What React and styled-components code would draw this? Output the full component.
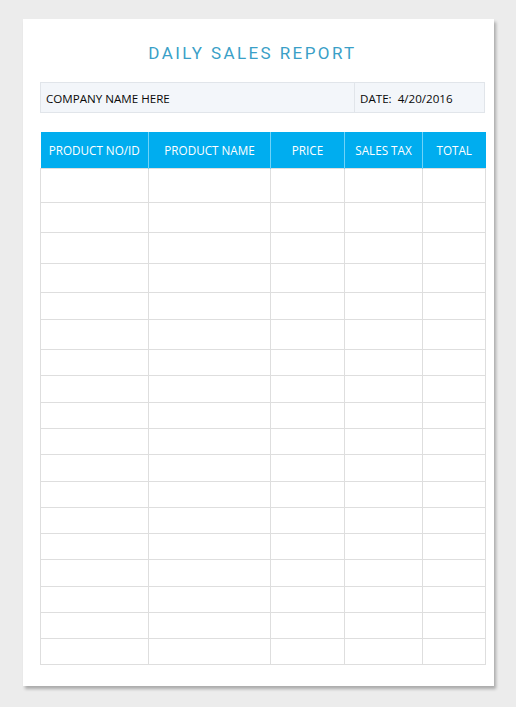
import React from "react";
import styled, { createGlobalStyle } from "styled-components";

const GlobalStyle = createGlobalStyle`
  html, body {
    margin: 0;
    padding: 0;
    background: #ececec;
  }
  body {
    font-family: "Open Sans", "Liberation Sans", sans-serif;
  }
`;

const Page = styled.div`
  width: 516px;
  height: 707px;
  padding: 19px 0 0 23px;
  box-sizing: border-box;
`;

const Paper = styled.div`
  width: 471px;
  height: 667px;
  background: #ffffff;
  box-shadow: 2px 3px 3px rgba(0, 0, 0, 0.28);
  padding: 0 9px 0 17px;
  box-sizing: border-box;
  display: flex;
  flex-direction: column;
`;

const Title = styled.h1`
  margin: 0;
  height: 63px;
  display: flex;
  align-items: center;
  justify-content: center;
  padding: 4px 20px 0 0;
  box-sizing: border-box;
  font-family: Roboto, "Liberation Sans", sans-serif;
  font-weight: 400;
  font-size: 17px;
  letter-spacing: 2.4px;
  color: #3a9fc7;
`;

const InfoBar = styled.div`
  display: flex;
  height: 31px;
  background: #f3f6fa;
  border: 1px solid #e1e5ea;
  box-sizing: border-box;
  font-size: 11.6px;
  color: #0a0a0a;
`;

const InfoCell = styled.div`
  display: flex;
  align-items: center;
  box-sizing: border-box;
  padding-left: 5px;
  padding-top: 2px;
  flex: ${p => (p.$grow ? 1 : "none")};
  width: ${p => (p.$width ? `${p.$width}px` : "auto")};
  border-left: ${p => (p.$divider ? "1px solid #e1e5ea" : "none")};
`;

const Table = styled.table`
  margin-top: 19px;
  width: 445px;
  border-collapse: collapse;
  table-layout: fixed;
`;

const HeadCell = styled.th`
  height: 36px;
  padding: 0;
  background: #00adef;
  color: #ffffff;
  font-weight: 400;
  font-size: 11.7px;
  text-align: center;
  border-left: 1px solid #6fd3f8;
  &:first-child {
    border-left: none;
  }
`;

const Cell = styled.td`
  padding: 0;
  border: 1px solid #dedede;
`;

const columns = [
  { label: "PRODUCT NO/ID", width: 108 },
  { label: "PRODUCT NAME", width: 122 },
  { label: "PRICE", width: 74 },
  { label: "SALES TAX", width: 78 },
  { label: "TOTAL", width: 63 },
];

const rowHeights = [34, 30, 31, 29, 27, 30, 26, 27, 26, 26, 27, 26, 26, 26, 27, 26, 26, 26];

export default function App() {
  return (
    <Page>
      <GlobalStyle />
      <Paper>
        <Title>DAILY SALES REPORT</Title>
        <InfoBar>
          <InfoCell $grow>COMPANY NAME HERE</InfoCell>
          <InfoCell $width={130} $divider>DATE:&nbsp; 4/20/2016</InfoCell>
        </InfoBar>
        <Table>
          <colgroup>
            {columns.map(c => (
              <col key={c.label} style={{ width: c.width }} />
            ))}
          </colgroup>
          <thead>
            <tr>
              {columns.map(c => (
                <HeadCell key={c.label}>{c.label}</HeadCell>
              ))}
            </tr>
          </thead>
          <tbody>
            {rowHeights.map((h, i) => (
              <tr key={i} style={{ height: h }}>
                {columns.map(c => (
                  <Cell key={c.label} />
                ))}
              </tr>
            ))}
          </tbody>
        </Table>
      </Paper>
    </Page>
  );
}
